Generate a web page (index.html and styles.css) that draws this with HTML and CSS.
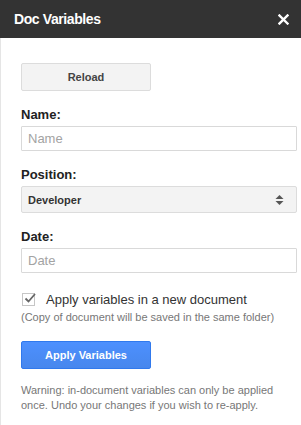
FILE: index.html
```html
<!DOCTYPE html>
<html>
<head>
<meta charset="utf-8">
<link rel="stylesheet" href="styles.css">
</head>
<body>
<div class="header">
  <span class="title">Doc Variables</span>
  <svg class="close" width="11" height="11" viewBox="0 0 11 11"><path d="M1.5 1.5 L9.5 9.5 M9.5 1.5 L1.5 9.5" stroke="#fff" stroke-width="2.4" stroke-linecap="square"/></svg>
</div>
<div class="content">
  <div class="reload-row"><button class="btn">Reload</button></div>
  <div class="field">
    <label class="lbl">Name:</label>
    <input class="txt" type="text" placeholder="Name">
  </div>
  <div class="field">
    <label class="lbl">Position:</label>
    <div class="select">
      <span>Developer</span>
      <svg width="9" height="12" viewBox="0 0 9 12"><path d="M4.5 1 L8.5 5 L0.5 5 Z M0.5 7 L8.5 7 L4.5 11 Z" fill="#555"/></svg>
    </div>
  </div>
  <div class="field">
    <label class="lbl">Date:</label>
    <input class="txt" type="text" placeholder="Date">
  </div>
  <div class="check-row">
    <span class="cb"><svg width="13" height="13" viewBox="0 0 13 13"><path d="M2.5 6.5 L5.5 9.5 L12 2" fill="none" stroke="#666" stroke-width="1.8"/></svg></span>
    <span class="cb-label">Apply variables in a new document</span>
  </div>
  <div class="note">(Copy of document will be saved in the same folder)</div>
  <button class="btn blue">Apply Variables</button>
  <p class="warn">Warning: in-document variables can only be applied once. Undo your changes if you wish to re-apply.</p>
</div>
</body>
</html>
```

FILE: styles.css
```css
html, body { margin: 0; padding: 0; }
body {
  font-family: "Liberation Sans", Arial, sans-serif;
  font-size: 13px;
  color: #333;
  background: #fff;
  width: 301px;
  height: 425px;
  overflow: hidden;
}
.header {
  height: 38px;
  background: #333333;
  display: flex;
  align-items: center;
  justify-content: space-between;
  padding: 0 12px 0 14px;
  box-sizing: border-box;
}
.title {
  color: #fff;
  font-weight: bold;
  font-size: 14px;
  letter-spacing: -0.4px;
}
.close { display: block; }
.content {
  border-left: 1px solid #e5e5e5;
  height: 387px;
  box-sizing: border-box;
  padding: 25px 4px 0 20px;
}
.btn {
  font-family: inherit;
  width: 130px;
  height: 28px;
  border: 1px solid #dcdcdc;
  border-radius: 2px;
  background: #f3f3f3;
  color: #444;
  font-weight: bold;
  font-size: 11px;
  padding: 0;
  display: block;
}
.reload-row { margin-bottom: 16px; }
.field { margin-bottom: 16px; }
.lbl {
  display: block;
  font-weight: bold;
  font-size: 13px;
  color: #222;
  line-height: 16px;
  margin-bottom: 3px;
}
.txt {
  display: block;
  width: 276px;
  height: 25px;
  box-sizing: border-box;
  border: 1px solid #d9d9d9;
  border-radius: 1px;
  padding: 0 6px;
  font-family: inherit;
  font-size: 13px;
  color: #333;
  margin: 0;
}
.txt::placeholder { color: #a3a3a3; }
.select {
  width: 276px;
  height: 27px;
  box-sizing: border-box;
  border: 1px solid #dcdcdc;
  border-radius: 2px;
  background: #f3f3f3;
  display: flex;
  align-items: center;
  justify-content: space-between;
  padding: 0 12px 0 6px;
  font-weight: bold;
  font-size: 11px;
  color: #333;
}
.select svg { display: block; }
.check-row {
  display: flex;
  align-items: center;
  margin-top: 18px;
  height: 16px;
}
.cb {
  width: 13px;
  height: 13px;
  border: 1px solid #c6c6c6;
  box-sizing: border-box;
  margin-left: 1px;
  margin-right: 11px;
  position: relative;
}
.cb svg { position: absolute; left: 0; top: -2px; }
.cb-label { font-size: 13px; color: #333; }
.note {
  font-size: 11px;
  line-height: 13px;
  color: #777;
  margin-top: 4px;
  margin-bottom: 17px;
}
.btn.blue {
  background: linear-gradient(#4d90fe, #4787ed);
  border: 1px solid #3079ed;
  color: #fff;
}
.warn {
  font-size: 11px;
  color: #777;
  line-height: 15px;
  margin: 14px 0 0 0;
}
```
